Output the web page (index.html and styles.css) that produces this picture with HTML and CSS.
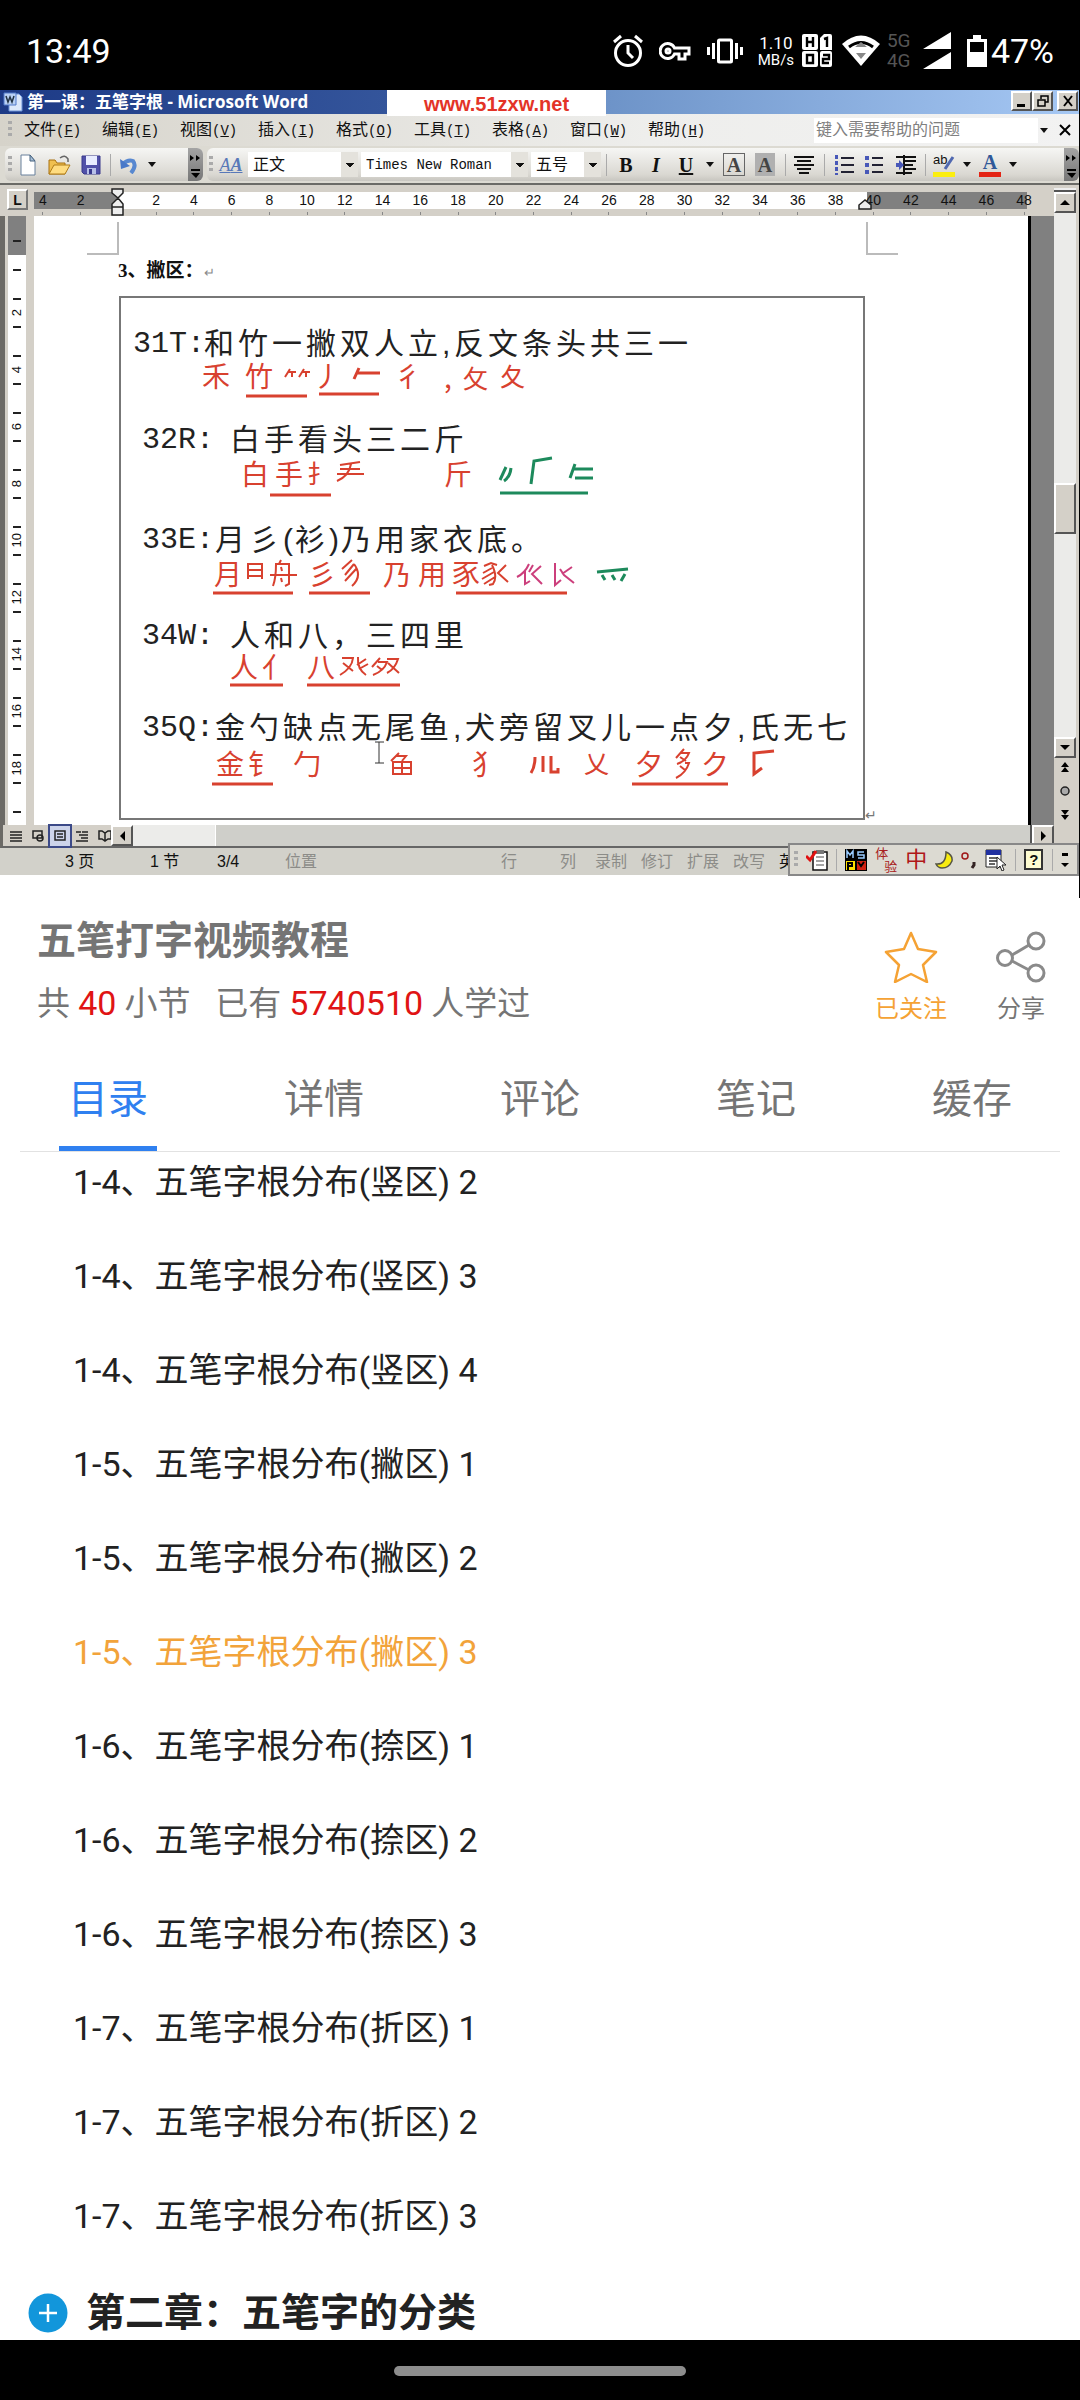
FILE: index.html
```html
<!DOCTYPE html>
<html lang="zh-CN">
<head>
<meta charset="utf-8">
<meta name="viewport" content="width=device-width">
<title>五笔打字视频教程</title>
<link rel="stylesheet" href="styles.css">
</head>
<body>
<div class="app">
  <header class="status">
    <time class="clock">13:49</time>
    <div class="status-icons">
      <svg class="i-alarm" width="30" height="34" viewBox="0 0 30 34" fill="none" stroke="#fff" stroke-width="3"><circle cx="15" cy="19" r="12.5"/><path d="M15 11v8l5 5M1 8l7-6M29 8l-7-6"/></svg>
      <svg class="i-key" width="32" height="20" viewBox="0 0 32 20" fill="none" stroke="#fff" stroke-width="3"><path d="M15.500 7A7.500 7.500 0 1 0 15.500 13H20v5h6v-5h4V7z"/><circle cx="9" cy="10" r="2"/></svg>
      <svg class="i-vib" width="36" height="26" viewBox="0 0 36 26" fill="none" stroke="#fff" stroke-width="3"><rect x="11.500" y="2" width="13" height="22" rx="1"/><path d="M6.500 5v16M29.500 5v16M1.500 9v8M34.500 9v8"/></svg>
      <div class="speed"><span>1.10</span><small>MB/s</small></div>
      <svg class="i-hd" width="30" height="34" viewBox="0 0 30 34"><g fill="#fff"><rect width="16" height="16" rx="2"/><rect y="17" width="16" height="16" rx="2"/><path d="M22 0h6a2 2 0 0 1 2 2v14H18V4z"/><rect x="18" y="17" width="12" height="16" rx="2"/></g><path fill="none" stroke="#000" stroke-width="2.400" d="M5 3v10M11 3v10M5 8h6M5 21h6v8H5zM22 5l3-1v9M21 21h6v4h-6v4h6"/></svg>
      <svg class="i-wifi" width="38" height="32" viewBox="0 0 38 32"><path fill="#fff" d="M0 9Q19-8 38 9L19 31z"/><path fill="none" stroke="#000" stroke-width="3" d="M7 12q12-9 24 0"/><path fill="#888" d="M13 12l6-5 6 5zM14 18h10l-5 6z"/></svg>
      <div class="net"><span>5G</span><span>4G</span></div>
      <svg class="i-sig" width="28" height="38" viewBox="0 0 28 38" fill="#fff"><path d="M28 0v17H0zM28 20v17H0z"/></svg>
      <svg class="i-bat" width="20" height="32" viewBox="0 0 20 32"><path fill="none" stroke="#fff" stroke-width="3" d="M1.500 5.500h17v25h-17z"/><path fill="#fff" d="M6 0h8v5H6zM1 17h18v14H1z"/></svg>
      <span class="pct">47%</span>
    </div>
  </header>

  <section class="video" aria-label="视频">
    <div class="titlebar">
      <div class="caption">
        <svg width="20" height="20" viewBox="0 0 20 20"><path fill="#dce8fa" stroke="#6c94d8" d="M6 2h10l3 3v14H6z"/><path fill="#b8d0f4" stroke="#5078c8" d="M1 1h12v12H1z"/><path fill="none" stroke="#234" stroke-width="1.500" d="M3 4l2 6 2-5 2 5 2-6"/></svg>
        <span>第一课：五笔字根 - Microsoft Word</span>
      </div>
      <div class="logo">www.51zxw.net</div>
      <div class="winbtns">
        <button aria-label="最小化"><svg width="12" height="12"><path fill="#000" d="M1 9h8v3H1z"/></svg></button>
        <button aria-label="还原"><svg width="12" height="12" fill="none" stroke="#000" stroke-width="1.500"><path d="M4 4V1h7v6H8M1 5h7v6H1z"/></svg></button>
        <button class="close" aria-label="关闭"><svg width="12" height="12" stroke="#000" stroke-width="2"><path d="M2 1l8 10M10 1L2 11"/></svg></button>
      </div>
    </div>

    <div class="menubar">
      <i class="grip"></i>
      <button>文件<span>(<u>F</u>)</span></button><button>编辑<span>(<u>E</u>)</span></button><button>视图<span>(<u>V</u>)</span></button><button>插入<span>(<u>I</u>)</span></button><button>格式<span>(<u>O</u>)</span></button><button>工具<span>(<u>T</u>)</span></button><button>表格<span>(<u>A</u>)</span></button><button>窗口<span>(<u>W</u>)</span></button><button>帮助<span>(<u>H</u>)</span></button>
      <input class="ask" type="text" placeholder="键入需要帮助的问题" aria-label="键入需要帮助的问题">
      <i class="down"></i>
      <button class="x" aria-label="关闭文档"><svg width="12" height="12" stroke="#000" stroke-width="2"><path d="M1 1l10 10M11 1L1 11"/></svg></button>
    </div>

    <div class="toolbars">
      <div class="bar standard">
        <i class="grip"></i>
        <button class="w24" aria-label="新建"><svg width="16" height="22"><path fill="#fff" stroke="#68809c" d="M1 1h9l5 6v14H1z"/><path fill="#a8c0d8" stroke="#46627e" d="M10 1v6h5z"/></svg></button>
        <button class="w38" aria-label="打开"><svg width="23" height="22"><path fill="#f0c050" stroke="#a87010" d="M1 20V6h6l2 3h8v11z"/><path fill="#ffdc80" stroke="#b07c18" d="M1 20l5-9h16l-5 9z"/><path fill="none" stroke="#666" stroke-width="1.500" d="M12 4q5-4 8 1v3"/></svg></button>
        <button class="w26" aria-label="保存"><svg width="20" height="20"><path fill="#5050a8" stroke="#38388c" d="M1 1h18v18H3l-2-2z"/><path fill="#e8ecff" d="M5 1h11v9H5z"/><path fill="#b8c0e8" d="M6 13h9v6H6z"/><path fill="#38388c" d="M8 14h3v5H8z"/></svg></button>
        <i class="sep w12"></i>
        <button class="w26" aria-label="撤消"><svg width="18" height="18" fill="none"><path stroke="#5888d0" stroke-width="4" d="M3 8q5-5 10-3 4 5-2 12"/><path fill="#4878c8" d="M0 3l1 10 9-3z"/></svg></button>
        <i class="down w20"></i>
        <i class="more"><svg width="12" height="26"><path d="M0 3l4 3-4 3zM6 3l4 3-4 3zM1 17h9v2H1zM1 21h9l-4 5z"/></svg></i>
      </div>
      <div class="bar format">
        <i class="grip"></i>
        <button class="aa" aria-label="样式">A<b>A</b></button>
        <select class="style" aria-label="样式"><option>正文</option></select>
        <select class="font" aria-label="字体"><option>Times New Roman</option></select>
        <select class="size" aria-label="字号"><option>五号</option></select>
        <i class="sep w10"></i>
        <button class="w30 serif"><b>B</b></button>
        <button class="w30 serif"><em>I</em></button>
        <button class="w30 serif"><u>U</u></button>
        <i class="down w18"></i>
        <button class="w30 serif"><span class="boxed">A</span></button>
        <button class="w32 serif"><span class="shade">A</span></button>
        <i class="sep w8"></i>
        <button class="w30" aria-label="居中"><svg width="20" height="18" stroke="#111" stroke-width="2"><path d="M0 1h20M3 5h14M0 9h20M3 13h14M5 17h10"/></svg></button>
        <i class="sep w10"></i>
        <button class="w30" aria-label="编号"><svg width="20" height="20" stroke-width="2"><path stroke="#223" d="M7 3h13M7 10h13M7 17h13"/><path stroke="#4858b8" stroke-width="3" stroke-dasharray="4 2" d="M2.500 0v20"/></svg></button>
        <button class="w30" aria-label="项目符号"><svg width="18" height="20" stroke-width="2"><path stroke="#223" d="M7 3h11M7 10h11M7 17h11"/><path stroke="#4858b8" stroke-width="4" stroke-dasharray="4 3" d="M2 1v18"/></svg></button>
        <button class="w34" aria-label="缩进"><svg width="20" height="20"><path stroke="#111" stroke-width="2" d="M0 2h20M9 6h11M9 10h8M9 14h11M0 18h16M8 0v20"/><path fill="#4858b8" d="M0 8h3V5l5 5-5 5v-3H0z"/></svg></button>
        <i class="sep w4"></i>
        <button class="w34 ink yellow" aria-label="突出显示"><span>ab</span><svg width="22" height="16"><path stroke="#5068b0" stroke-width="3" d="M12 14l8-12"/></svg></button>
        <i class="down w12"></i>
        <button class="w34 ink red" aria-label="字体颜色"><b>A</b></button>
        <i class="down w12"></i>
        <i class="more"><svg width="12" height="26"><path d="M0 3l4 3-4 3zM6 3l4 3-4 3zM1 17h9v2H1zM1 21h9l-4 5z"/></svg></i>
      </div>
    </div>

    <div class="editor">
      <div class="left">
        <div class="ruler">
          <div class="tabsel">L</div>
          <div class="band">
            <span>4</span><span>2</span><span class="zero"><svg width="14" height="28" viewBox="0 0 14 28" fill="#eee" stroke="#222" stroke-width="1.500"><path d="M1 1h11v4l-5 5-6-5zM7 10l5 6v3H1v-3zM1 19h11v8H1z"/></svg></span><span>2</span><span>4</span><span>6</span><span>8</span><span>10</span><span>12</span><span>14</span><span>16</span><span>18</span><span>20</span><span>22</span><span>24</span><span>26</span><span>28</span><span>30</span><span>32</span><span>34</span><span>36</span><span>38</span><span class="indent"><svg width="14" height="11" fill="#eee" stroke="#222" stroke-width="1.500"><path d="M1 10V6l6-5 6 5v4z"/></svg>40</span><span>42</span><span>44</span><span>46</span><span>48</span>
          </div>
        </div>
        <div class="work">
          <div class="vruler">
            <div class="margin"><i></i></div>
            <div class="first"><i></i></div>
            <div class="n"><b>2</b></div><div class="n"><b>4</b></div><div class="n"><b>6</b></div><div class="n"><b>8</b></div><div class="n"><b>10</b></div><div class="n"><b>12</b></div><div class="n"><b>14</b></div><div class="n"><b>16</b></div><div class="n"><b>18</b></div><div class="last"><i></i></div>
          </div>
          <div class="page">
            <div class="corners"><i class="tl"></i><i class="tr"></i></div>
            <h2>3、撇区：<span>↵</span></h2>
            <div class="board">
              <p class="r1"><b>31T:</b><i>和</i><i>竹</i><i>一</i><i>撇</i><i>双</i><i>人</i><i>立</i><s>,</s><i>反</i><i>文</i><i>条</i><i>头</i><i>共</i><i>三</i><i>一</i></p>
              <svg class="notes" width="742" height="40" viewBox="121 360 742 40">
                <text x="202" y="385">禾</text><text x="245" y="385">竹</text><text x="313" y="385">丿</text><text x="394" y="385">彳</text><text x="444" y="386">,</text><text class="sm" x="463" y="386">攵</text><text class="sm" x="500" y="384">夂</text>
                <path class="thin" d="M285 375l5-8M289 370h7M292 370v5M299 375l5-8M303 370h7M306 370v5"/><path d="M354 377l5-11M357 371h23"/>
                <path d="M246 394h61M319 392h60"/>
              </svg>
              <p class="r2"><b>32R:</b><s></s><i>白</i><i>手</i><i>看</i><i>头</i><i>三</i><i>二</i><i>斤</i></p>
              <svg class="notes" width="742" height="40" viewBox="121 456 742 40">
                <text x="241" y="483">白</text><text x="275" y="483">手</text><text class="sm" x="307" y="481">扌</text><text x="444" y="483">斤</text>
                <path class="thin" d="M340 463l20-3M340 467h20M337 472h27M351 462q-2 12-14 17"/><path d="M270 493h61"/>
                <path class="g" d="M506 465l-6 13M511 466q-1 9-7 13M531 482l3-23 18-3M570 476l5-14M573 467h20M575 476h18M500 491h88"/>
              </svg>
              <p class="r3"><b>33E:</b><i>月</i><i>彡</i><s>(</s><i>衫</i><s>)</s><i>乃</i><i>用</i><i>家</i><i>衣</i><i>底</i><i>。</i></p>
              <svg class="notes" width="742" height="40" viewBox="121 556 742 40">
                <text x="214" y="583">月</text><text x="308" y="583">彡</text><text x="383" y="583">乃</text><text x="418" y="583">用</text><text x="452" y="583">豕</text>
                <path class="thin" d="M248 577v-15h14v15M248 568h14M248 574h14M273 584q3-8 3-22h13v20l-4 2M270 573h27M281 558l-2 4M281 565l1 4M281 576l1 4M352 558l-10 9M354 562l-9 11M357 566l-12 13M354 562q9 12-2 22M484 564l7-3 6 2M492 563q6 12 1 19l-4 1M492 566l-9 5M494 570l-12 7M495 575l-11 7M506 563l-8 8 10 9"/>
                <path d="M213 591h80M309 591h61M456 591h111"/>
                <path class="m" d="M529 562q-4 9-12 13M525 569v13l5-3M529 570l4-7M541 564l-9 8 10 10M555 561v22l6-5M572 565l-10 7M560 567l4 6 10 8"/>
                <path class="g" d="M597 570l31-3M602 573l3 5M612 573l3 5M625 572l-4 7"/>
              </svg>
              <p class="r4"><b>34W:</b><s></s><i>人</i><i>和</i><i>八</i><i>，</i><i>三</i><i>四</i><i>里</i></p>
              <svg class="notes" width="742" height="40" viewBox="121 651 742 40">
                <text x="230" y="675">人</text><text x="262" y="675">亻</text><text x="307" y="675">八</text>
                <path class="thin" d="M342 655h11q-1 10-13 17M343 660l10 8M358 654q-1 12 8 18M366 656l-9 6M368 661l-9 5M380 655l-8 9M378 659h9q-3 9-14 13M377 663l5 4M387 656h11q-3 10-11 14M388 660l11 10"/>
                <path d="M230 682h53M307 682h93"/>
              </svg>
              <p class="r5"><b>35Q:</b><i>金</i><i>勺</i><i>缺</i><i>点</i><i>无</i><i>尾</i><i>鱼</i><s>,</s><i>犬</i><i>旁</i><i>留</i><i>叉</i><i>儿</i><i>一</i><i>点</i><i>夕</i><s>,</s><i>氏</i><i>无</i><i>七</i></p>
              <svg class="notes" width="742" height="40" viewBox="121 743 742 40">
                <text x="216" y="772">金</text><text x="248" y="772">钅</text><text x="293" y="772">勹</text><text x="472" y="772">犭</text><text class="sm" x="584" y="770">乂</text><text x="635" y="772">夕</text><text x="701" y="772">ク</text>
                <path class="thin" d="M399 750l-8 8M397 753h9l-4 5M393 759h18v12h-18zM402 759v12M393 765h18M684 746l-8 9M681 750h8q-3 8-12 11M680 754l6 4M685 760h4q-3 10-13 15M680 763l5 4"/>
                <path d="M535 754q0 10-4 16M543 753v16M551 753v16h7v-4M774 748l-20 2v21l8-6"/>
                <path d="M212 781h61M632 781h96"/>
                <path class="ibeam" d="M375 739h9M379 739v21M375 760h9"/>
              </svg>
              <span class="mark">↵</span>
            </div>
          </div>
        </div>
        <div class="hscroll">
          <div class="views">
            <svg width="12" height="12" stroke="#222" stroke-width="1.500"><path d="M0 2h12M0 5h12M0 8h12M0 11h12"/></svg>
            <svg width="12" height="12" fill="none" stroke="#222" stroke-width="1.500"><path d="M1 1h9v7H1z"/><circle cx="8" cy="8" r="3"/></svg>
            <svg class="on" width="12" height="12" fill="none" stroke="#222" stroke-width="1.500"><path d="M1 1h10v9H1zM3 4h6M3 7h6"/></svg>
            <svg width="12" height="12" fill="none" stroke="#222" stroke-width="1.500"><path d="M0 2h5M6 2h6M3 5h9M5 8h7M0 11h12"/></svg>
            <svg width="14" height="12" fill="none" stroke="#222" stroke-width="1.500"><path d="M1 1h3l3 2 3-2h3v8h-3l-3 2-3-2H1zM7 3v8"/></svg>
          </div>
          <button class="sb lft" aria-label="向左"></button>
          <div class="htrack"><div class="hthumb"></div></div>
          <button class="sb rgt" aria-label="向右"></button>
        </div>
      </div>
      <div class="vscroll">
        <i class="split"></i>
        <button class="sb up" aria-label="向上"></button>
        <div class="vtrack"><div class="vthumb"></div></div>
        <button class="sb dwn" aria-label="向下"></button>
        <svg width="14" height="66" viewBox="0 0 14 66"><path d="M7 4l4 5H3zM7 9l4 5H3zM7 57l4-5H3zM7 62l4-5H3z"/><circle cx="7" cy="33" r="4" fill="#aaa" stroke="#222" stroke-width="1.500"/></svg>
      </div>
    </div>

    <div class="info">
      <span>3 页</span><span>1 节</span><span>3/4</span><span class="dim">位置</span><span class="dim">行</span><span class="dim">列</span><span class="dim">录制</span><span class="dim">修订</span><span class="dim">扩展</span><span class="dim">改写</span><span>英</span>
    </div>
    <div class="ime">
      <i class="grip"></i>
      <svg width="22" height="22"><path fill="#fff" stroke="#111" stroke-width="1.500" d="M7 3h14v18H7z"/><path stroke="#888" stroke-width="1.500" d="M10 8h8M10 12h8M10 16h8"/><path fill="#777" d="M10 1h8v4h-8z"/><path fill="none" stroke="#e01010" stroke-width="3" d="M0 7l4 4 6-9"/></svg>
      <i class="sep"></i>
      <svg width="22" height="22"><path d="M0 0h22v22H0z"/><path fill="#ffe000" d="M1 12h9v9H1z"/><path fill="#d02010" d="M12 12h9v9h-9z"/><path fill="none" stroke="#9cf" stroke-width="1.500" d="M2 9V2l3 4 3-4v7M19 3h-6v3h6v3h-6"/><path fill="none" stroke="#000" stroke-width="2" d="M3 21v-7h4v3H3M13 13l3 4 3-4"/></svg>
      <span class="ty"><span>体</span><span>验</span></span>
      <span class="zh">中</span>
      <svg width="18" height="18"><path fill="#f8ec10" stroke="#554" stroke-width="1.500" d="M11 1q7 3 6 9-3 7-10 7-4 0-6-4 10 1 10-12z"/></svg>
      <svg width="16" height="18"><circle cx="4" cy="5" r="3" fill="none" stroke="#a01818" stroke-width="1.500"/><path fill="none" stroke="#322" stroke-width="3" d="M13 11v3l-2 3"/></svg>
      <svg width="22" height="22"><path fill="#fff" stroke="#222" d="M1 1h15v17H1z"/><path fill="#2030a0" d="M1 1h15v5H1z"/><path stroke="#333" stroke-width="1.500" d="M4 9h9M4 12h9M4 15h6"/><path fill="#fff" stroke="#222" d="M12 8v12l3-3 2 5 2-1-2-5h4z"/></svg>
      <i class="sep"></i>
      <span class="help">?</span>
      <i class="sep"></i>
      <svg width="8" height="16"><path d="M1 1h6v3H1zM0 11h8l-4 4z"/></svg>
    </div>
  </section>

  <section class="course">
    <div class="meta">
      <h1>五笔打字视频教程</h1>
      <p>共 <em>40</em> 小节 &nbsp; 已有 <em>5740510</em> 人学过</p>
    </div>
    <button class="act fav"><svg width="54" height="52" viewBox="0 0 54 52" fill="none" stroke="#f5a234" stroke-width="2.500" stroke-linejoin="round"><path d="M27 2l7 16 18 3-13 13 4 17-16-8-16 8 4-17L2 21l18-3z"/></svg>已关注</button>
    <button class="act"><svg width="50" height="52" viewBox="0 0 50 52" fill="none" stroke="#8a8a8a" stroke-width="3"><circle cx="40" cy="10" r="8"/><circle cx="9" cy="27" r="7.500"/><circle cx="40" cy="42" r="8"/><path d="M16 24l17-10M16 30l17 9"/></svg>分享</button>
  </section>

  <nav class="tabs">
    <button class="on">目录</button><button>详情</button><button>评论</button><button>笔记</button><button>缓存</button>
  </nav>

  <main class="list">
    <ul>
      <li><a href="#">1-4、五笔字根分布(竖区) 2</a></li>
      <li><a href="#">1-4、五笔字根分布(竖区) 3</a></li>
      <li><a href="#">1-4、五笔字根分布(竖区) 4</a></li>
      <li><a href="#">1-5、五笔字根分布(撇区) 1</a></li>
      <li><a href="#">1-5、五笔字根分布(撇区) 2</a></li>
      <li><a href="#" class="on">1-5、五笔字根分布(撇区) 3</a></li>
      <li><a href="#">1-6、五笔字根分布(捺区) 1</a></li>
      <li><a href="#">1-6、五笔字根分布(捺区) 2</a></li>
      <li><a href="#">1-6、五笔字根分布(捺区) 3</a></li>
      <li><a href="#">1-7、五笔字根分布(折区) 1</a></li>
      <li><a href="#">1-7、五笔字根分布(折区) 2</a></li>
      <li><a href="#">1-7、五笔字根分布(折区) 3</a></li>
    </ul>
    <button class="chapter"><svg width="40" height="40" viewBox="0 0 40 40"><circle cx="20" cy="20" r="19.500" fill="#1296db"/><path stroke="#fff" stroke-width="2.500" d="M11 20h18M20 11v18"/></svg>第二章：五笔字的分类</button>
  </main>
  <footer class="navbar"><i></i></footer>
</div>
</body>
</html>
```
FILE: styles.css
```css
* { box-sizing: border-box; margin: 0; padding: 0; }
body { background: #fff; font-family: Roboto, "Noto Sans CJK SC", sans-serif; color: #222; }
button, input, select { font: inherit; color: inherit; border: 0; background: none; }
i, em { font-style: normal; }
svg { display: block; flex: none; }
.app { display: flex; flex-direction: column; min-height: 100vh; }

/* phone status bar */
.status { display: flex; justify-content: space-between; align-items: center; height: 90px; padding: 12px 26px 0; background: #000; color: #fff; }
.clock, .pct { font-size: 34px; line-height: 40px; font-weight: 400; }
.pct { margin-left: 4px; }
.status-icons { display: flex; align-items: center; }
.i-key { margin-left: 16px; }
.i-vib { margin-left: 16px; }
.speed { display: flex; flex-direction: column; align-items: center; width: 36px; margin: 0 8px 0 15px; font-size: 17px; line-height: 17px; }
.speed small { font-size: 15px; line-height: 16px; }
.i-wifi { margin-left: 10px; }
.net { display: flex; flex-direction: column; margin: 0 12px 0 7px; width: 24px; font-size: 19px; line-height: 20px; color: #555; }
.i-bat { margin-left: 16px; }

/* video frame: word processor window */
.video { position: relative; height: 808px; background: #fff; border-right: 1px solid #000; font-family: "Liberation Sans", "Noto Sans CJK SC", sans-serif; color: #111; }
.titlebar { display: flex; align-items: flex-start; height: 24px; background: linear-gradient(90deg, #1d3a86, #34559b 36%, #6d93c8 56%, #a6c8f4); }
.caption { display: flex; align-items: center; gap: 4px; width: 387px; height: 24px; padding-left: 3px; color: #fff; font: bold 17px/24px "Open Sans", "Noto Sans CJK SC", sans-serif; white-space: nowrap; }
.logo { position: relative; width: 219px; height: 26px; background: #fff; color: #e33327; font-weight: bold; font-size: 20px; line-height: 28px; text-align: center; }
.winbtns { display: flex; margin: 1px 1px 0 auto; }
.winbtns button { display: grid; place-items: center; width: 21px; height: 20px; background: #d4d0c8; border: 2px solid; border-color: #fff #555 #555 #fff; }
.winbtns .close { margin-left: 4px; }

.menubar { display: flex; align-items: center; height: 32px; padding-left: 8px; background: linear-gradient(90deg, #d6d3ca, #eeeeec 60%, #f2f2f2); }
.grip { width: 4px; height: 18px; margin-right: 10px; background: repeating-linear-gradient(#aaa 0 3px, transparent 3px 6px); flex: none; }
.menubar button { flex: none; width: 78px; text-align: left; font-size: 16px; line-height: 24px; white-space: nowrap; padding-left: 2px; }
.menubar button span { font: 14px/20px "Liberation Mono", monospace; }
.ask { width: 224px; height: 25px; margin-left: auto; padding-left: 2px; background: #fff; font-size: 16px; line-height: 24px; }
.ask::placeholder { color: #808080; opacity: 1; }
.menubar .x { width: 16px; padding: 0; margin: 0 4px 0 9px; }
.down { flex: none; display: grid; place-items: center; width: 12px; height: 12px; }
.down::after { content: ""; border: 4px solid transparent; border-top: 5px solid #111; border-bottom: 0; }

.toolbars { display: flex; gap: 4px; height: 39px; padding: 2px 0 2px 5px; background: #dcdad2; border-bottom: 2px solid #6a6a66; }
.bar { display: flex; align-items: center; border-radius: 6px; background: linear-gradient(#f6f6f4, #dad8d2 80%, #c8c6c0); overflow: hidden; }
.bar.standard { width: 198px; padding-left: 3px; flex: none; }
.bar.format { flex: 1; }
.bar .grip { margin-right: 4px; }
.format .grip { margin-left: 2px; }
.bar button { display: grid; place-items: center; height: 30px; flex: none; }
.sep { flex: none; height: 22px; background: linear-gradient(#aaa, #aaa) center / 1px 100% no-repeat; }
.more { align-self: stretch; flex: none; width: 15px; margin-left: auto; display: grid; place-items: center; background: linear-gradient(#a4a4a4, #777); }
.w4 { width: 4px; } .w8 { width: 8px; } .w10 { width: 10px; } .w12 { width: 12px; } .w18 { width: 18px; } .w20 { width: 20px; }
.w24 { width: 24px; } .w26 { width: 26px; } .w30 { width: 30px; } .w32 { width: 32px; } .w34 { width: 34px; } .w38 { width: 38px; }
.bar .aa { display: block; width: 28px; margin-right: 3px; font: italic 18px/28px "Liberation Serif", serif; color: #5878b8; text-decoration: underline; }
.bar select { appearance: none; height: 25px; margin-right: 3px; padding-left: 5px; border-radius: 0; font-size: 16px; line-height: 24px; background: conic-gradient(from -45deg at 50% 100%, #111 90deg, transparent 0) right 4px center / 8px 4px no-repeat, linear-gradient(90deg, transparent calc(100% - 17px), #e4e2dc 0), #fff; }
.style { width: 110px; } .font { width: 167px; } .bar .size { width: 70px; margin-right: 0; }
.bar select.font { font: 14px/24px "Liberation Mono", monospace; }
.serif { font: 20px/24px "Liberation Serif", serif; }
.bar .serif { font: 20px/24px "Liberation Serif", serif; }
.serif em { font-style: italic; font-weight: bold; }
.serif u { font-weight: bold; }
.boxed, .shade { display: block; width: 22px; height: 23px; line-height: 22px; border: 1px solid #666; font-weight: bold; color: #444; }
.shade { width: 20px; background: #b0b0b0; border-color: #b0b0b0; }
.bar .ink { display: grid; align-content: start; justify-content: center; background: linear-gradient(#fbee10, #fbee10) center 22px / 22px 5px no-repeat; }
.bar .red { background-image: linear-gradient(#e42414, #e42414); }
.ink > * { grid-area: 1 / 1; }
.ink span { justify-self: start; width: 22px; text-align: left; font-size: 13px; line-height: 20px; }
.ink svg { align-self: start; margin-top: 5px; }
.ink b { font: bold 20px/24px "Liberation Serif", serif; color: #305898; }

.editor { display: flex; height: 663px; background: #d4d0c8; padding-right: 3px; }
.left { flex: 1; min-width: 0; }
.ruler { display: flex; height: 31px; padding: 4px 11px 0 7px; }
.tabsel { flex: none; width: 21px; height: 21px; margin-right: -4px; border: 2px solid; border-color: #fff #777 #777 #fff; font-size: 14px; line-height: 18px; font-weight: bold; text-align: center; }
.band { flex: 1; display: grid; grid-template-columns: repeat(27, 1fr); height: 17px; margin-top: 3px; font-size: 14px; line-height: 17px; text-align: center; background: linear-gradient(90deg, transparent 10px, #808080 0 94px, #fff 0 843px, #808080 0 1003px, transparent 0); }
.band span { position: relative; height: 23px; background: linear-gradient(#888, #888) center bottom / 1px 3px no-repeat; }
.band svg { position: absolute; left: 12px; top: -4px; }
.band .indent svg { left: 4px; top: 7px; }
.work { display: flex; height: 609px; border-left: 5px solid #6c6a66; padding-left: 3px; background: #d4d0c8; }
.vruler { flex: none; width: 18px; margin-right: 8px; background: #fff; overflow: hidden; display: flex; flex-direction: column; }
.vruler div { display: grid; place-items: center; flex: none; }
.vruler i { width: 8px; height: 2px; background: #222; }
.vruler .margin { height: 39px; padding-top: 10px; background: #808080; }
.vruler .first { height: 29px; }
.vruler .last { height: 29px; }
.vruler .n { height: 57px; background: linear-gradient(#222, #222) center 14px / 8px 2px no-repeat, linear-gradient(#222, #222) center 42px / 8px 2px no-repeat; }
.vruler b { font-size: 13px; line-height: 16px; font-weight: 400; writing-mode: vertical-rl; transform: rotate(180deg); }
.page { flex: 1; min-width: 0; background: #fff; border-right: 3px solid #000; box-shadow: 23px 0 0 #808080; margin-right: 23px; }
.corners { display: flex; justify-content: space-between; padding: 6px 130px 0 53px; height: 39px; }
.corners i { width: 32px; border-bottom: 2px solid #bbb; }
.tl { border-right: 2px solid #bbb; } .tr { border-left: 2px solid #bbb; }
.page h2 { margin: 4px 0 11px 84px; font: bold 19px/24px "Liberation Serif", "Noto Sans CJK SC", serif; }
.page h2 span { font-size: 13px; font-weight: 400; color: #888; }
.board { position: relative; height: 524px; margin: 0 163px 0 85px; padding-top: 28px; border: 2px solid #777; }
.board p { display: flex; height: 36px; padding-left: 21px; font-size: 30px; line-height: 36px; color: #222; white-space: nowrap; }
.board .r1 { padding-left: 12px; }
.board b { width: 73px; font: 30px/36px "Liberation Mono", monospace; flex: none; }
.board .r1 b { width: 71px; }
.board p i { width: 34px; flex: none; }
.board s { width: 12px; flex: none; text-decoration: none; }
.board .r2 s, .board .r4 s { width: 15px; }
.board .r2 { margin-top: 20px; } .board .r3 { margin-top: 24px; } .board .r4 { margin-top: 20px; } .board .r5 { margin-top: 16px; }
.notes { overflow: visible; fill: none; stroke: #d8412f; stroke-width: 3; }
.notes text { font-family: "Noto Sans CJK SC", sans-serif; font-size: 28px; fill: #d8412f; stroke: none; }
.notes .sm { font-size: 25px; }
.notes .thin { stroke-width: 2; }
.notes .g { stroke: #1d8a5c; }
.notes .m { stroke: #cc3f7c; stroke-width: 2; }
.notes .ibeam { stroke: #333; stroke-width: 1; }
.mark { position: absolute; right: -14px; bottom: -6px; font-size: 14px; line-height: 18px; color: #777; }

.hscroll { display: flex; align-items: center; height: 23px; border-left: 3px solid #6c6a66; border-bottom: 2px solid #666; padding-left: 7px; }
.views { display: flex; align-items: center; gap: 10px; width: 101px; }
.views .on { background: #cdd4ea; box-shadow: 0 0 0 4px #cdd4ea, 0 0 0 6px #3c4a88; }
.sb { flex: none; display: grid; place-items: center; width: 22px; height: 21px; background: #d4d0c8; border: 2px solid; border-color: #fff #555 #555 #fff; }
.sb::after { content: ""; border: 5px solid transparent; }
.lft::after { border-right-color: #000; border-left: 0; } .rgt::after { border-left-color: #000; border-right: 0; }
.up::after { border-bottom-color: #000; border-top: 0; } .dwn::after { border-top-color: #000; border-bottom: 0; }
.htrack { flex: 1; height: 21px; padding-left: 82px; background: #ececea; }
.hthumb { height: 21px; background: #cfcfca; border-left: 1px solid #fff; border-right: 2px solid #555; }
.vscroll { display: flex; flex-direction: column; align-items: center; width: 22px; padding-top: 3px; }
.split { width: 22px; height: 4px; border-bottom: 2px solid #555; background: #eee; }
.vtrack { flex: 1; align-self: stretch; padding-top: 270px; background: #ebebe9; }
.vthumb { height: 51px; background: #d4d0c8; border: 2px solid; border-color: #fff #555 #555 #fff; }
.vscroll svg { margin: 0 0 24px; }

.info { display: flex; height: 27px; padding-left: 65px; background: #d2d1ca; font-size: 16px; line-height: 28px; white-space: nowrap; }
.info span { width: 46px; flex: none; }
.info span:nth-child(1) { width: 85px; }
.info span:nth-child(2) { width: 67px; }
.info span:nth-child(3) { width: 68px; }
.info span:nth-child(4) { width: 216px; }
.info span:nth-child(5) { width: 59px; }
.info span:nth-child(6) { width: 35px; }
.info .dim { color: #8c8c88; }
.ime { position: absolute; right: 0; top: 753px; display: flex; align-items: center; justify-content: space-between; width: 291px; height: 33px; padding: 0 8px 0 4px; background: #dcdad2; border: 2px solid #888; }
.ime .grip { margin: 0; }
.ime .sep { width: 2px; }
.ty { display: flex; flex-direction: column; width: 22px; color: #a82020; font-size: 13px; line-height: 13px; }
.ty span + span { text-align: right; }
.zh { font-size: 22px; line-height: 26px; color: #b01818; }
.help { width: 19px; height: 21px; background: #fdfbd0; border: 2px solid #333; font-weight: bold; font-size: 15px; line-height: 17px; text-align: center; }

/* course header */
.course { display: flex; align-items: flex-start; padding: 16px 5px 0 37px; height: 144px; color: #757575; }
.meta { flex: 1; }
.meta h1 { font-size: 39px; line-height: 54px; font-weight: 700; }
.meta p { margin-top: 12px; font-size: 33px; line-height: 46px; }
.meta em { font-size: 34px; color: #e01414; }
.act { display: flex; flex-direction: column; align-items: center; gap: 6px; width: 108px; padding-top: 17px; font-size: 24px; line-height: 40px; color: #757575; }
.fav { color: #f5a234; margin-right: 2px; }

.tabs { display: flex; height: 110px; background: linear-gradient(#e2e2e2, #e2e2e2) center bottom / calc(100% - 40px) 1px no-repeat; }
.tabs button { flex: 1; position: relative; padding-top: 6px; font-size: 40px; line-height: 56px; color: #757575; }
.tabs .on { color: #2f80f0; }
.tabs .on::after { content: ""; position: absolute; left: 50%; bottom: 1px; width: 98px; height: 5px; margin-left: -49px; background: #2f80f0; }

.list { flex: 1; }
.list ul { list-style: none; }
.list li { padding: 0 0 34px 73px; }
.list a { display: block; font-size: 34px; line-height: 60px; color: #222; text-decoration: none; }
.list .on { color: #f2a33a; }
.chapter { display: flex; align-items: center; gap: 18px; height: 60px; padding: 6px 0 0 28px; font-size: 39px; line-height: 54px; font-weight: 700; }
.navbar { display: grid; place-items: center; height: 60px; background: #000; }
.navbar i { width: 27%; height: 10px; margin-top: 2px; border-radius: 5px; background: #8d8d8d; }
```
